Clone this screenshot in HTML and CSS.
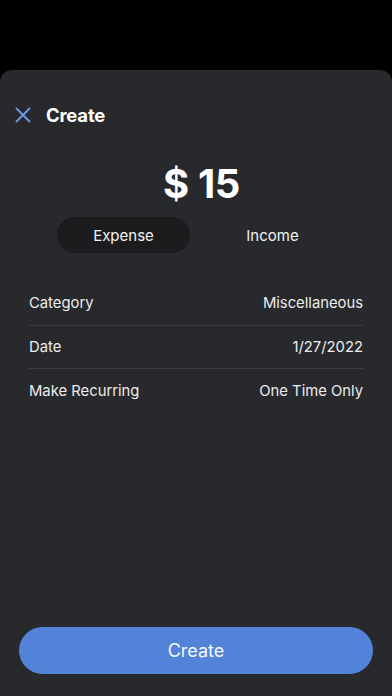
FILE: index.html
```html
<!DOCTYPE html>
<html lang="en">
<head>
  <meta charset="UTF-8" />
  <title>Create</title>
  <link rel="stylesheet" href="styles.css">
</head>
<body>
  <div class="sheet">
    <div class="header">
      <button class="close-button" aria-label="Close">
        <svg width="16" height="16" viewBox="0 0 16 16">
          <path d="M1.5 1.5 L14.5 14.5 M14.5 1.5 L1.5 14.5" stroke="#6f9be6" stroke-width="1.8" stroke-linecap="round" fill="none"/>
        </svg>
      </button>
      <h1>Create</h1>
    </div>

    <div class="amount">$ 15</div>

    <div class="segments">
      <button class="segment active">Expense</button>
      <button class="segment">Income</button>
    </div>

    <div class="fields">
      <div class="field">
        <span>Category</span>
        <span>Miscellaneous</span>
      </div>
      <div class="field">
        <span>Date</span>
        <span>1/27/2022</span>
      </div>
      <div class="field">
        <span>Make Recurring</span>
        <span>One Time Only</span>
      </div>
    </div>

    <div class="spacer"></div>

    <button class="create-button">Create</button>
  </div>
</body>
</html>
```

FILE: styles.css
```css
* {
  box-sizing: border-box;
}

html, body {
  height: 100%;
}

body {
  font-family: Inter, 'Noto Sans', sans-serif;
  margin: 0;
  background: #000;
  color: #f2f2f2;
  display: flex;
  flex-direction: column;
}

.sheet {
  margin-top: 70px;
  flex: 1;
  background: #28292d;
  border-radius: 12px 12px 0 0;
  display: flex;
  flex-direction: column;
  padding: 0 19px 22px;
}

.header {
  display: flex;
  align-items: center;
  height: 30px;
  margin-top: 30px;
}

.close-button {
  background: none;
  border: none;
  padding: 0;
  width: 31px;
  margin-left: -4px;
  display: flex;
  align-items: center;
  cursor: pointer;
}

.header h1 {
  margin: 0;
  font-size: 18.5px;
  font-weight: 700;
  color: #fff;
  letter-spacing: -0.2px;
}

.amount {
  text-align: center;
  font-size: 40px;
  font-weight: 700;
  color: #fff;
  margin-top: 30px;
  padding-left: 11px;
  line-height: 48px;
  letter-spacing: -0.4px;
}

.segments {
  display: grid;
  grid-template-columns: 133px 133px;
  gap: 16px;
  justify-content: center;
  margin-top: 9px;
  margin-left: 4px;
}

.segment {
  height: 36px;
  border: none;
  border-radius: 18px;
  background: none;
  color: #f2f2f2;
  font-family: inherit;
  font-size: 15px;
  cursor: pointer;
}

.segment.active {
  background: #1c1c1e;
}

.fields {
  margin: 29px 10px 0;
}

.field {
  display: flex;
  justify-content: space-between;
  align-items: center;
  height: 43.5px;
  font-size: 14.8px;
  color: #ececec;
  border-bottom: 1px solid #3c3d42;
}

.field:last-child {
  border-bottom: none;
}

.spacer {
  flex: 1;
}

.create-button {
  height: 47px;
  border: none;
  border-radius: 24px;
  background: #5383d8;
  color: #f4f7fd;
  font-family: inherit;
  font-size: 18px;
  cursor: pointer;
}
```
